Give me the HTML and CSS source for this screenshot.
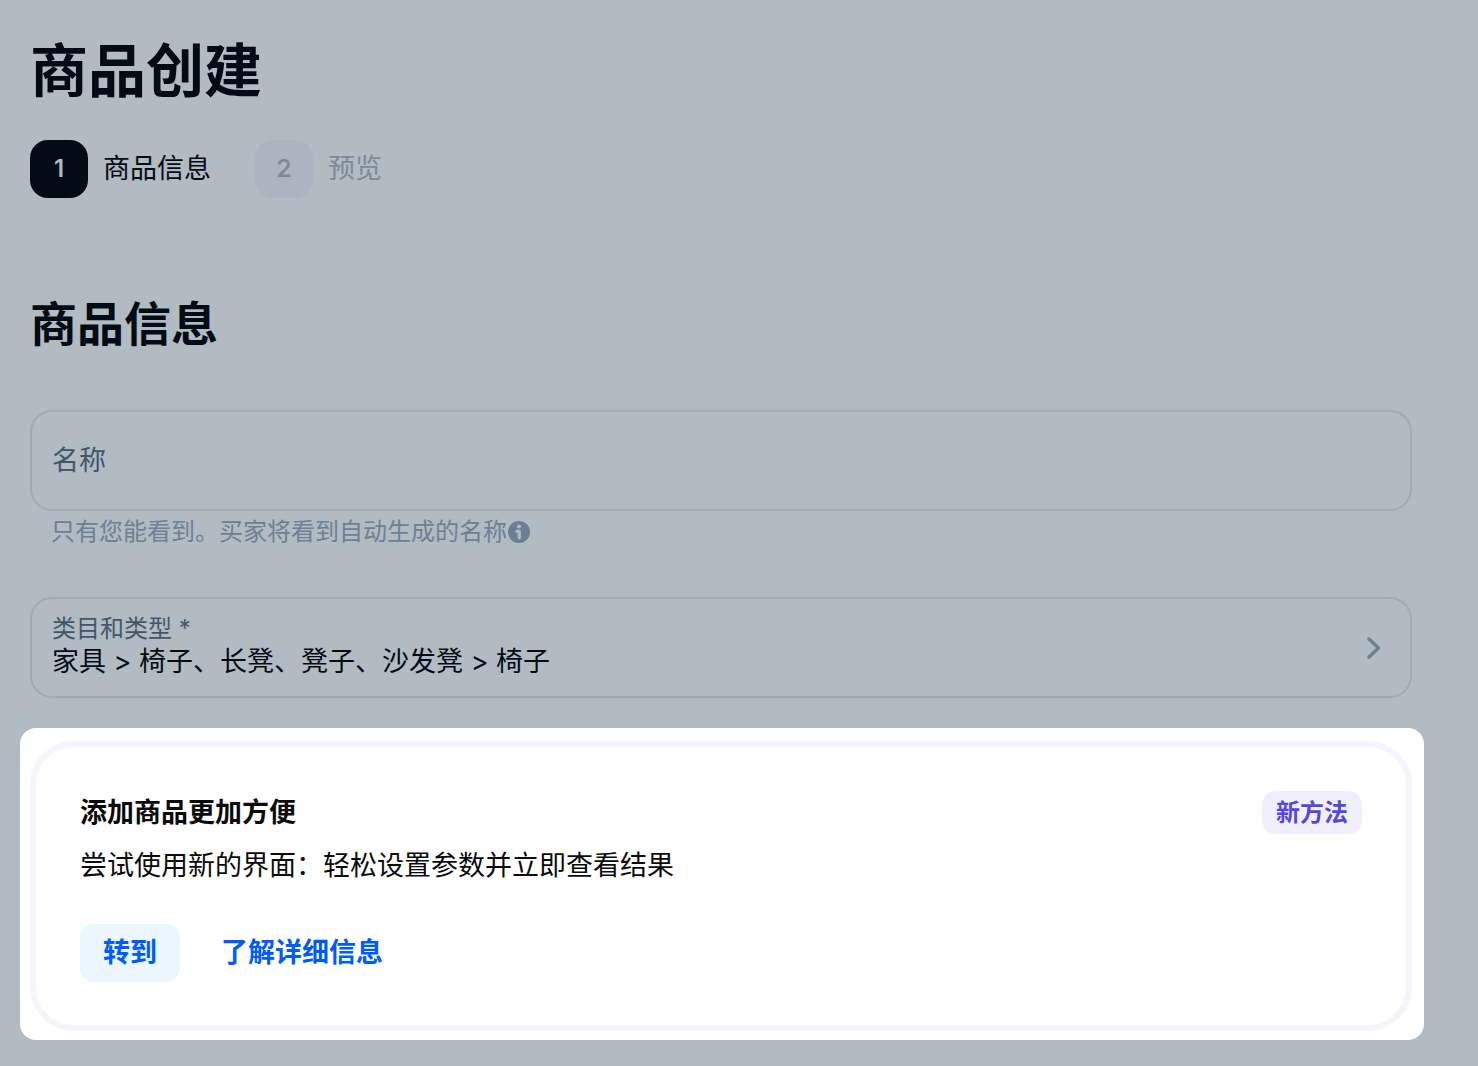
FILE: index.html
```
<!DOCTYPE html>
<html lang="zh-CN">
<head>
    <meta charset="UTF-8">
    <meta name="viewport" content="width=device-width, initial-scale=1.0">
    <title>商品创建</title>

    <link rel="stylesheet" href="styles.css">
</head>
<body>
    <main class="page">
        <h1 class="page-title">商品创建</h1>

        <ol class="steps">
            <li class="step active" aria-current="step">
                <span class="step-number">1</span>
                <span class="step-name">商品信息</span>
            </li>
            <li class="step">
                <span class="step-number">2</span>
                <span class="step-name">预览</span>
            </li>
        </ol>

        <form class="product-form">
            <h2 class="section-title">商品信息</h2>

            <input class="field name-input" type="text" id="name" name="name" placeholder="名称" aria-label="名称" aria-describedby="name-hint">
            <p class="hint" id="name-hint">
                <span>只有您能看到。买家将看到自动生成的名称</span>
                <svg class="info-icon" viewBox="0 0 22 22" aria-hidden="true">
                    <circle cx="11" cy="11" r="11" fill="#6c8095"/>
                    <circle cx="11" cy="5.500" r="2" fill="#b2bac2"/>
                    <path d="M8.800 10.300h2.500v6.500" fill="none" stroke="#b2bac2" stroke-width="3.200" stroke-linecap="round" stroke-linejoin="round"/>
                </svg>
            </p>

            <button type="button" class="field category">
                <span class="category-text">
                    <span class="category-label">类目和类型 *</span>
                    <span class="category-value">家具 &gt; 椅子、长凳、凳子、沙发凳 &gt; 椅子</span>
                </span>
                <svg class="chevron" viewBox="0 0 16 24" aria-hidden="true">
                    <path d="M3 3l9.500 9L3 21" fill="none" stroke="#6c8095" stroke-width="3.400" stroke-linecap="round" stroke-linejoin="round"/>
                </svg>
            </button>
        </form>

        <section class="callout">
            <div class="callout-box">
                <div class="callout-header">
                    <h3 class="callout-title">添加商品更加方便</h3>
                    <span class="badge">新方法</span>
                </div>
                <p class="callout-text">尝试使用新的界面：轻松设置参数并立即查看结果</p>
                <div class="callout-actions">
                    <button type="button" class="go-button">转到</button>
                    <a class="more-link" href="#">了解详细信息</a>
                </div>
            </div>
        </section>
    </main>
</body>
</html>
```
FILE: styles.css
```
* {
    box-sizing: border-box;
}

body {
    margin: 0;
    background-color: #b2bac2;
    color: #030c14;
    font-family: Inter, "Noto Sans CJK SC", sans-serif;
    font-size: 27px;
    line-height: 40px;
}

h1, h2, h3, p, ol {
    margin: 0;
    padding: 0;
}

button, input {
    font: inherit;
    color: inherit;
}

.page {
    padding: 30px 66px 26px 30px;
}

.page-title {
    font-size: 58px;
    line-height: 82px;
    font-weight: 700;
}

/* steps */
.steps {
    display: flex;
    gap: 44px;
    margin-top: 28px;
    list-style: none;
}

.step {
    display: flex;
    align-items: center;
    gap: 15px;
    color: #7c8a99;
}

.step-number {
    display: flex;
    align-items: center;
    justify-content: center;
    width: 58px;
    height: 58px;
    border-radius: 18px;
    background-color: #acb4bf;
    font-size: 24px;
    font-weight: 600;
}

.step.active {
    color: #030c14;
}

.step.active .step-number {
    background-color: #030c14;
    color: #b2bac2;
}

/* form */
.section-title {
    margin: 94px 0 54px;
    font-size: 47px;
    line-height: 64px;
    font-weight: 700;
}

.field {
    display: flex;
    align-items: center;
    width: 100%;
    height: 101px;
    padding: 0 20px;
    border: 2px solid #9eabb9;
    border-radius: 22px;
    background-color: transparent;
    text-align: left;
}

.name-input::placeholder {
    color: #43566b;
    opacity: 1;
}

.hint {
    display: flex;
    align-items: center;
    gap: 1px;
    margin: 5px 0 49px 21px;
    color: #6c8095;
    font-size: 24px;
    line-height: 32px;
}

.info-icon {
    width: 22px;
    height: 22px;
}

.category {
    justify-content: space-between;
    padding-right: 28px;
}

.category-text {
    display: flex;
    flex-direction: column;
    padding-bottom: 3px;
}

.category-label {
    color: #43566b;
    font-size: 24px;
    line-height: 32px;
}

.category-value {
    line-height: 34px;
}

.chevron {
    width: 16px;
    height: 24px;
}

/* callout */
.callout {
    margin: 30px -12px 0 -10px;
    padding: 13px 12px 9px 10px;
    border-radius: 16px;
    background-color: #ffffff;
    color: #0a0a0a;
}

.callout-box {
    padding: 44px 44px 43px;
    border: 6px solid #f5f6fb;
    border-radius: 44px;
}

.callout-header {
    display: flex;
    align-items: center;
    justify-content: space-between;
}

.callout-title {
    font-size: 27px;
    font-weight: 700;
}

.badge {
    padding: 5px 14px;
    border-radius: 14px;
    background-color: #f1effd;
    color: #5447dd;
    font-size: 24px;
    line-height: 33px;
    font-weight: 700;
}

.callout-text {
    margin-top: 12px;
}

.callout-actions {
    display: flex;
    align-items: center;
    gap: 41px;
    margin-top: 38px;
}

.go-button {
    height: 58px;
    padding: 0 23px;
    border: none;
    border-radius: 14px;
    background-color: #ebf6ff;
    color: #005bff;
    font-weight: 700;
}

.more-link {
    color: #005bff;
    font-weight: 700;
    text-decoration: none;
}
```
